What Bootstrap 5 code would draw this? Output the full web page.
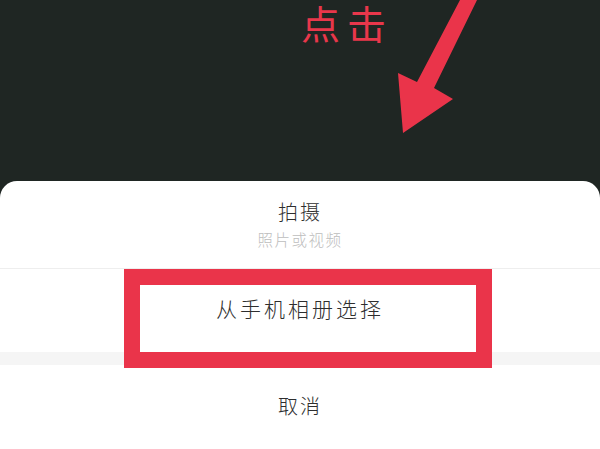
<!DOCTYPE html>
<html lang="zh">
<head>
<meta charset="utf-8">
<title>拍摄</title>
<link rel="stylesheet" href="https://cdn.jsdelivr.net/npm/bootstrap@5.3.0/dist/css/bootstrap.min.css">
<style>
html, body { height: 449px; overflow: hidden; }
body { background: #1f2623; font-family: "Noto Sans CJK SC", "Liberation Sans", sans-serif; font-weight: 300; }
.stage { width: 600px; height: 449px; overflow: hidden; }
.hero-zone { height: 181px; flex: none; }
.sheet { flex: 1; border-radius: 17px 17px 0 0; overflow: hidden; background: #fff; color: #2e2e2e; }
.opt-shoot { height: 88px; border-bottom: 1px solid #eeeeee; padding-top: 16px; }
.opt-shoot-main { font-size: 20px; line-height: 30px; letter-spacing: 2px; }
.opt-shoot-sub { font-size: 15.5px; line-height: 24px; letter-spacing: 1.5px; color: #bdbdbd; }
.opt-album { height: 83px; font-size: 21px; letter-spacing: 3px; padding-bottom: 3px; }
.gap-band { height: 13px; background: #f5f5f5; }
.opt-cancel { flex: 1; font-size: 20px; letter-spacing: 2px; padding-bottom: 2px; }
.click-note { left: 301px; top: 0; font-size: 39px; line-height: 44px; letter-spacing: 7px; font-weight: 400; color: #e8374b; }
.arrow-mark { left: 0; top: 0; }
.red-frame { left: 124px; top: 269px; width: 368px; height: 99px; border: 16.5px solid #ea344a; }
</style>
</head>
<body>
<div class="stage position-relative d-flex flex-column">
  <div class="hero-zone"></div>
  <div class="sheet d-flex flex-column text-center">
    <div class="opt-shoot">
      <div class="opt-shoot-main">拍摄</div>
      <div class="opt-shoot-sub">照片或视频</div>
    </div>
    <div class="opt-album d-flex align-items-center justify-content-center">从手机相册选择</div>
    <div class="gap-band"></div>
    <div class="opt-cancel d-flex align-items-center justify-content-center">取消</div>
  </div>
  <div class="click-note position-absolute">点击</div>
  <svg class="arrow-mark position-absolute" width="600" height="181" viewBox="0 0 600 181" aria-hidden="true">
    <polygon points="460,0 477,0 434,88 453,99 403,133 398,73 417,82" fill="#ea344a"/>
  </svg>
  <div class="red-frame position-absolute"></div>
</div>
<script src="https://cdn.jsdelivr.net/npm/bootstrap@5.3.0/dist/js/bootstrap.bundle.min.js"></script>
</body>
</html>
